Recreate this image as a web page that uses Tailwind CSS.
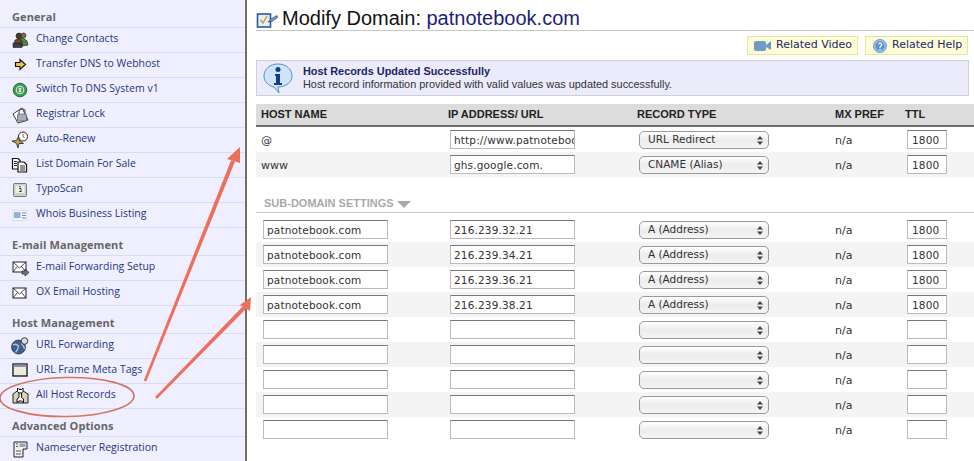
<!DOCTYPE html>
<html lang="en">
<head>
<meta charset="UTF-8">
<title>Modify Domain</title>
<script src="https://cdn.jsdelivr.net/npm/@tailwindcss/browser@4"></script>
</head>
<body class="bg-white w-[974px] h-[461px] overflow-hidden relative font-['Liberation_Sans',sans-serif]">
<div class="flex h-[461px]">
  <!-- left menu -->
  <aside class="w-[247px] shrink-0 bg-[#efefff] border-r-2 border-[#6f6f6f] font-['Open_Sans',sans-serif] text-[10.5px] text-[#27387f]">
    <h3 class="h-[28px] flex items-end pb-[2px] pl-[12px] border-b border-[#d3dff0] text-[11px] tracking-[0.1px] font-bold text-[#666]">General</h3>
    <a class="h-[25px] flex items-center border-b border-[#d3dff0]"><svg class="w-[18px] h-[18px] ml-[11px] mr-[7px]" viewBox="0 0 18 18"><circle cx="8" cy="5" r="3" fill="#4a3a20" stroke="#222" stroke-width=".6"/><circle cx="12.500" cy="4.500" r="2.500" fill="#7a6a48" stroke="#222" stroke-width=".6"/><path d="M8 8 Q13 6 16 10 L17 14 L11 15Z" fill="#4f8a3a" stroke="#222" stroke-width=".7"/><path d="M3 15 L4 9 Q8 7 11 10 L11 15Z" fill="#7b4a22" stroke="#222" stroke-width=".7"/><rect x="2" y="12" width="9" height="4.500" fill="#3a3f4a" stroke="#111" stroke-width=".5"/></svg><span class="-mt-[2px]">Change Contacts</span></a>
    <a class="h-[25px] flex items-center border-b border-[#d3dff0]"><svg class="w-[18px] h-[18px] ml-[11px] mr-[7px]" viewBox="0 0 18 18"><path d="M4.500 6.500 H9 V3.500 L14.500 8.500 L9 13.500 V10.500 H4.500Z" fill="#f2c744" stroke="#111" stroke-width="1.200"/></svg><span class="-mt-[2px]">Transfer DNS to Webhost</span></a>
    <a class="h-[25px] flex items-center border-b border-[#d3dff0]"><svg class="w-[18px] h-[18px] ml-[11px] mr-[7px]" viewBox="0 0 18 18"><circle cx="9" cy="9" r="6.800" fill="#3f9a52" stroke="#2a6a3a"/><circle cx="9" cy="9" r="3.800" fill="none" stroke="#d8f0dc" stroke-width="1"/><path d="M10.500 7.500H8V9H10V10.500H7.500M9 6.500V11.500" fill="none" stroke="#e8f6e8" stroke-width=".8"/></svg><span class="-mt-[2px]">Switch To DNS System v1</span></a>
    <a class="h-[25px] flex items-center border-b border-[#d3dff0]"><svg class="w-[18px] h-[18px] ml-[11px] mr-[7px]" viewBox="0 0 18 18"><path d="M2 8 L11 2 L17 14 L7 17Z" fill="#fff" stroke="#222" stroke-width=".9"/><path d="M8 8V6a3 3 0 0 1 6 0v2" fill="none" stroke="#667" stroke-width="1.300"/><rect x="6.500" y="8" width="9" height="7" rx="1" fill="#a6abb8" stroke="#556" stroke-width=".7"/></svg><span class="-mt-[2px]">Registrar Lock</span></a>
    <a class="h-[25px] flex items-center border-b border-[#d3dff0]"><svg class="w-[18px] h-[18px] ml-[11px] mr-[7px]" viewBox="0 0 18 18"><circle cx="12" cy="5.500" r="4.500" fill="#fff" stroke="#222"/><path d="M12 3v2.500l1.500 1" fill="none" stroke="#444" stroke-width=".8"/><path d="M1 10 L5.500 9.500 L7.500 5.500 L8.500 10 L12.500 12.500 L8 12.500 L7 17 L5.500 12.500Z" fill="#c9a24a" stroke="#222" stroke-width=".8"/></svg><span class="-mt-[2px]">Auto-Renew</span></a>
    <a class="h-[25px] flex items-center border-b border-[#d3dff0]"><svg class="w-[18px] h-[18px] ml-[11px] mr-[7px]" viewBox="0 0 18 18"><path d="M1.500 2.500H7L9 4.500V13H1.500Z" fill="#fff" stroke="#111" stroke-width="1.200"/><path d="M7 6H13L15.500 8.500V16H7Z" fill="#fff" stroke="#111" stroke-width="1.200"/><path d="M3 5.500H6M3 7.500H6M3 9.500H6M9 10H14M9 12H14M9 14H14" stroke="#111" stroke-width=".9"/></svg><span class="-mt-[2px]">List Domain For Sale</span></a>
    <a class="h-[25px] flex items-center border-b border-[#d3dff0]"><svg class="w-[18px] h-[18px] ml-[11px] mr-[7px]" viewBox="0 0 18 18"><rect x="2.500" y="2.500" width="13" height="13" rx="1" fill="#cfcfc8" stroke="#777"/><rect x="4.500" y="4.500" width="9" height="7.500" fill="#f0f0ea"/><path d="M8 7.500h2v3M8 10.500h2.500M8 5.800h2" fill="none" stroke="#333" stroke-width=".9"/></svg><span class="-mt-[2px]">TypoScan</span></a>
    <a class="h-[25px] flex items-center border-b border-[#d3dff0]"><svg class="w-[18px] h-[18px] ml-[11px] mr-[7px]" viewBox="0 0 18 18"><rect x="2" y="4.500" width="14" height="10" fill="#f5f8fc" stroke="#cdd6e4" stroke-width=".7"/><rect x="3" y="6" width="6.500" height="6" fill="#8fb2de"/><path d="M11 7h4M11 9.500h4M11 12h4" stroke="#7a8596"/></svg><span class="-mt-[2px]">Whois Business Listing</span></a>

    <h3 class="h-[28px] flex items-end pb-[2px] pl-[12px] border-b border-[#d3dff0] text-[11px] tracking-[0.1px] font-bold text-[#666]">E-mail Management</h3>
    <a class="h-[25px] flex items-center border-b border-[#d3dff0]"><svg class="w-[18px] h-[18px] ml-[11px] mr-[7px]" viewBox="0 0 18 18"><rect x="2" y="3" width="13" height="10" fill="#fff" stroke="#222"/><path d="M2 3 L8.500 9 L15 3M2 13 L6.500 7.500M15 13 L10.500 7.500" fill="none" stroke="#222" stroke-width=".8"/><path d="M11 12H14V10L18 13.500L14 17V15H11Z" fill="#6f747e" stroke="#222" stroke-width=".7"/></svg><span class="-mt-[2px]">E-mail Forwarding Setup</span></a>
    <a class="h-[25px] flex items-center border-b border-[#d3dff0]"><svg class="w-[18px] h-[18px] ml-[11px] mr-[7px]" viewBox="0 0 18 18"><rect x="2" y="4" width="13" height="10" fill="#fff" stroke="#222"/><path d="M2 4 L8.500 10 L15 4M2 14 L6.500 8.500M15 14 L10.500 8.500" fill="none" stroke="#222" stroke-width=".8"/></svg><span class="-mt-[2px]">OX Email Hosting</span></a>

    <h3 class="h-[28px] flex items-end pb-[2px] pl-[12px] border-b border-[#d3dff0] text-[11px] tracking-[0.1px] font-bold text-[#666]">Host Management</h3>
    <a class="h-[25px] flex items-center border-b border-[#d3dff0]"><svg class="w-[18px] h-[18px] ml-[11px] mr-[7px]" viewBox="0 0 18 18"><circle cx="7.500" cy="10" r="7" fill="#3f5f8c" stroke="#1f2f4a" stroke-width=".7"/><path d="M2 8 Q5 6 7.500 9 Q7 13 4.500 15.500M10 6.500 Q13 8.500 13.500 12" fill="none" stroke="#b5c6dc" stroke-width="1.300"/><circle cx="13.500" cy="4" r="3.300" fill="#d4d8e0" stroke="#222" stroke-width=".8"/></svg><span class="-mt-[2px]">URL Forwarding</span></a>
    <a class="h-[25px] flex items-center border-b border-[#d3dff0]"><svg class="w-[18px] h-[18px] ml-[11px] mr-[7px]" viewBox="0 0 18 18"><rect x="2" y="2" width="14" height="12" fill="#ecebdf" stroke="#111" stroke-width="1.300"/><rect x="2.500" y="2.500" width="13" height="2.500" fill="#8a90a0"/></svg><span class="-mt-[2px]">URL Frame Meta Tags</span></a>
    <a class="h-[25px] flex items-center border-b border-[#d3dff0]"><svg class="w-[18px] h-[18px] ml-[11px] mr-[7px]" viewBox="0 0 18 18"><path d="M2 16V7L9 2L17 7V16Z" fill="#d9d2b4" stroke="#222"/><path d="M6.500 1V4.500L8 6H10.500L12 4.500V1L10.500 2.500H8Z M8 6V10.500L6 12V15.500L8 14H10.500L12.500 15.500V12L10.500 10.500V6" fill="#fff" stroke="#111"/></svg><span class="-mt-[2px]">All Host Records</span></a>

    <h3 class="h-[28px] flex items-end pb-[2px] pl-[12px] border-b border-[#d3dff0] text-[11px] tracking-[0.1px] font-bold text-[#666]">Advanced Options</h3>
    <a class="h-[25px] flex items-center border-b border-[#d3dff0]"><svg class="w-[18px] h-[18px] ml-[11px] mr-[7px]" viewBox="0 0 18 18"><path d="M3 2H16V9H12V17H3Z" fill="#f2f2ea" stroke="#222"/><rect x="8.500" y="3.500" width="6" height="3.500" fill="#9aa4b5"/><path d="M5 4h2M5 6.500h2M5 11h5M5 14h5" stroke="#555"/></svg><span class="-mt-[2px]">Nameserver Registration</span></a>
  </aside>

  <!-- main -->
  <main class="flex-1 pl-[9px] font-['DejaVu_Sans',sans-serif] text-[11px] text-[#333]">
    <div class="h-[31px] flex items-center gap-[4px] border-b border-[#c8c8c8] pt-[6px]">
      <svg class="w-[22px] h-[20px]" viewBox="0 0 22 20"><rect x="1.500" y="6" width="13" height="13" fill="#e4edf8" stroke="#2b5c93" stroke-width="1.600"/><path d="M4.500 12 L7 15 L11 8" fill="none" stroke="#cfa02a" stroke-width="1.500"/><path d="M12 14 L15 11 L21 7.500 L21.500 9.500 L16 13.500Z" fill="#7a9cc6" stroke="#2b3f63" stroke-width=".7"/></svg>
      <h1 class="font-['Liberation_Sans',sans-serif] text-[20px] text-[#111]">Modify Domain: <span class="text-[#1c1f78]">patnotebook.com</span></h1>
    </div>

    <div class="h-[19px] mt-[5px] mr-[6px] flex justify-end gap-[7px] text-[#1f2a6e]">
      <a class="w-[111px] flex items-center gap-[5px] pl-[6px] bg-[#fdfdd8] border border-[#e6e6a0]"><svg class="w-[17px] h-[11px]" viewBox="0 0 17 11"><rect x="0" y="1" width="12" height="10" rx="2" fill="#6f9cc4"/><path d="M12 5 L17 1 V10 L12 7Z" fill="#6f9cc4"/></svg>Related Video</a>
      <a class="w-[103px] flex items-center gap-[5px] pl-[7px] bg-[#fdfdd8] border border-[#e6e6a0]"><svg class="w-[14px] h-[14px]" viewBox="0 0 14 14"><circle cx="7" cy="7" r="6.500" fill="#9cc0e8" stroke="#6f9cc8"/><circle cx="7" cy="7" r="4.500" fill="#5a90d0"/><path d="M5.500 5.500a1.600 1.600 0 1 1 2.200 1.700L7 8v1" fill="none" stroke="#fff" stroke-width="1.200"/><circle cx="7" cy="10.500" r=".8" fill="#fff"/></svg>Related Help</a>
    </div>

    <div class="h-[36px] mt-[5px] mr-[5px] flex items-center bg-[#ebebfb] border border-[#cfcfd8] font-['Liberation_Sans',sans-serif] text-[10.9px] text-[#333]">
      <svg class="w-[32px] h-[32px] ml-[5px] mr-[9px]" viewBox="0 0 32 32"><path d="M16 2C8 2 2 7 2 14c0 6 5 10 10 11l5 6-1-6c8 0 14-5 14-11C30 7 24 2 16 2Z" fill="#cfe4f8" stroke="#5b8fc4"/><circle cx="16" cy="7.500" r="2.500" fill="#123f8c"/><path d="M13 12H18V21H20V23H12V21H14V14H13Z" fill="#123f8c"/></svg>
      <div class="leading-[13px]">
        <p class="font-bold text-[#1c2566]">Host Records Updated Successfully</p>
        <p>Host record information provided with valid values was updated successfully.</p>
      </div>
    </div>

    <div class="h-[23px] mt-[8px] grid grid-cols-[192px_189px_198px_70px_1fr] items-center bg-[#dcdcdc] border-b-2 border-[#6e6e6e] font-['Liberation_Sans',sans-serif] text-[11px] font-bold text-[#222]">
      <span class="pl-[5px]">HOST NAME</span><span>IP ADDRESS/ URL</span><span>RECORD TYPE</span><span>MX PREF</span><span>TTL</span>
    </div>

    <div class="h-[25px] grid grid-cols-[192px_189px_198px_70px_1fr] items-center">
      <span class="pl-[5px] pt-[3px]">@</span>
      <span class="pl-[2px]"><input value="http://www.patnotebook.com" class="w-[125px] h-[19px] pl-[3px] text-[10.5px] tracking-[0.15px] bg-white border border-[#bbb] border-t-[#777]"></span>
      <span class="pl-[2px] relative"><select class="appearance-none w-[130px] h-[18px] pl-[8px] block text-[10.5px] rounded-[5px] border border-[#999] bg-linear-to-b from-white via-[#ececec] to-[#f4f4f4]"><option>URL Redirect</option></select><svg class="absolute left-[120px] top-[5px] w-[6px] h-[9px]" viewBox="0 0 6 9"><path d="M3 0L6 3.500H0ZM3 9L0 5.500H6Z" fill="#444"/></svg></span>
      <span class="pt-[3px]">n/a</span>
      <span class="pl-[2px]"><input value="1800" class="w-[40px] h-[19px] pl-[4px] text-[10.5px] tracking-[0.15px] bg-white border border-[#bbb] border-t-[#777]"></span>
    </div>
    <div class="h-[25px] grid grid-cols-[192px_189px_198px_70px_1fr] items-center bg-[#f4f4f4]">
      <span class="pl-[5px] pt-[3px]">www</span>
      <span class="pl-[2px]"><input value="ghs.google.com." class="w-[125px] h-[19px] pl-[3px] text-[10.5px] tracking-[0.15px] bg-white border border-[#bbb] border-t-[#777]"></span>
      <span class="pl-[2px] relative"><select class="appearance-none w-[130px] h-[18px] pl-[8px] block text-[10.5px] rounded-[5px] border border-[#999] bg-linear-to-b from-white via-[#ececec] to-[#f4f4f4]"><option>CNAME (Alias)</option></select><svg class="absolute left-[120px] top-[5px] w-[6px] h-[9px]" viewBox="0 0 6 9"><path d="M3 0L6 3.500H0ZM3 9L0 5.500H6Z" fill="#444"/></svg></span>
      <span class="pt-[3px]">n/a</span>
      <span class="pl-[2px]"><input value="1800" class="w-[40px] h-[19px] pl-[4px] text-[10.5px] tracking-[0.15px] bg-white border border-[#bbb] border-t-[#777]"></span>
    </div>

    <div class="h-[36px] mb-[4px] flex items-end gap-[3px] pl-[8px] pb-[1px] border-b border-[#c8c8c8] font-['Liberation_Sans',sans-serif] text-[11px] font-bold text-[#aaa]">
      SUB-DOMAIN SETTINGS
      <svg class="w-[14px] h-[7px] mb-[3px]" viewBox="0 0 14 7"><path d="M0 0H14L7 7Z" fill="#aaa"/></svg>
    </div>

    <div class="h-[25px] grid grid-cols-[192px_189px_198px_70px_1fr] items-center">
      <span class="pl-[7px]"><input value="patnotebook.com" class="w-[125px] h-[19px] pl-[3px] text-[10.5px] tracking-[0.15px] bg-white border border-[#bbb] border-t-[#777]"></span>
      <span class="pl-[2px]"><input value="216.239.32.21" class="w-[125px] h-[19px] pl-[3px] text-[10.5px] tracking-[0.15px] bg-white border border-[#bbb] border-t-[#777]"></span>
      <span class="pl-[2px] relative"><select class="appearance-none w-[130px] h-[18px] pl-[8px] block text-[10.5px] rounded-[5px] border border-[#999] bg-linear-to-b from-white via-[#ececec] to-[#f4f4f4]"><option>A (Address)</option></select><svg class="absolute left-[120px] top-[5px] w-[6px] h-[9px]" viewBox="0 0 6 9"><path d="M3 0L6 3.500H0ZM3 9L0 5.500H6Z" fill="#444"/></svg></span>
      <span class="pt-[3px]">n/a</span>
      <span class="pl-[2px]"><input value="1800" class="w-[40px] h-[19px] pl-[4px] text-[10.5px] tracking-[0.15px] bg-white border border-[#bbb] border-t-[#777]"></span>
    </div>
    <div class="h-[25px] grid grid-cols-[192px_189px_198px_70px_1fr] items-center bg-[#f4f4f4]">
      <span class="pl-[7px]"><input value="patnotebook.com" class="w-[125px] h-[19px] pl-[3px] text-[10.5px] tracking-[0.15px] bg-white border border-[#bbb] border-t-[#777]"></span>
      <span class="pl-[2px]"><input value="216.239.34.21" class="w-[125px] h-[19px] pl-[3px] text-[10.5px] tracking-[0.15px] bg-white border border-[#bbb] border-t-[#777]"></span>
      <span class="pl-[2px] relative"><select class="appearance-none w-[130px] h-[18px] pl-[8px] block text-[10.5px] rounded-[5px] border border-[#999] bg-linear-to-b from-white via-[#ececec] to-[#f4f4f4]"><option>A (Address)</option></select><svg class="absolute left-[120px] top-[5px] w-[6px] h-[9px]" viewBox="0 0 6 9"><path d="M3 0L6 3.500H0ZM3 9L0 5.500H6Z" fill="#444"/></svg></span>
      <span class="pt-[3px]">n/a</span>
      <span class="pl-[2px]"><input value="1800" class="w-[40px] h-[19px] pl-[4px] text-[10.5px] tracking-[0.15px] bg-white border border-[#bbb] border-t-[#777]"></span>
    </div>
    <div class="h-[25px] grid grid-cols-[192px_189px_198px_70px_1fr] items-center">
      <span class="pl-[7px]"><input value="patnotebook.com" class="w-[125px] h-[19px] pl-[3px] text-[10.5px] tracking-[0.15px] bg-white border border-[#bbb] border-t-[#777]"></span>
      <span class="pl-[2px]"><input value="216.239.36.21" class="w-[125px] h-[19px] pl-[3px] text-[10.5px] tracking-[0.15px] bg-white border border-[#bbb] border-t-[#777]"></span>
      <span class="pl-[2px] relative"><select class="appearance-none w-[130px] h-[18px] pl-[8px] block text-[10.5px] rounded-[5px] border border-[#999] bg-linear-to-b from-white via-[#ececec] to-[#f4f4f4]"><option>A (Address)</option></select><svg class="absolute left-[120px] top-[5px] w-[6px] h-[9px]" viewBox="0 0 6 9"><path d="M3 0L6 3.500H0ZM3 9L0 5.500H6Z" fill="#444"/></svg></span>
      <span class="pt-[3px]">n/a</span>
      <span class="pl-[2px]"><input value="1800" class="w-[40px] h-[19px] pl-[4px] text-[10.5px] tracking-[0.15px] bg-white border border-[#bbb] border-t-[#777]"></span>
    </div>
    <div class="h-[25px] grid grid-cols-[192px_189px_198px_70px_1fr] items-center bg-[#f4f4f4]">
      <span class="pl-[7px]"><input value="patnotebook.com" class="w-[125px] h-[19px] pl-[3px] text-[10.5px] tracking-[0.15px] bg-white border border-[#bbb] border-t-[#777]"></span>
      <span class="pl-[2px]"><input value="216.239.38.21" class="w-[125px] h-[19px] pl-[3px] text-[10.5px] tracking-[0.15px] bg-white border border-[#bbb] border-t-[#777]"></span>
      <span class="pl-[2px] relative"><select class="appearance-none w-[130px] h-[18px] pl-[8px] block text-[10.5px] rounded-[5px] border border-[#999] bg-linear-to-b from-white via-[#ececec] to-[#f4f4f4]"><option>A (Address)</option></select><svg class="absolute left-[120px] top-[5px] w-[6px] h-[9px]" viewBox="0 0 6 9"><path d="M3 0L6 3.500H0ZM3 9L0 5.500H6Z" fill="#444"/></svg></span>
      <span class="pt-[3px]">n/a</span>
      <span class="pl-[2px]"><input value="1800" class="w-[40px] h-[19px] pl-[4px] text-[10.5px] tracking-[0.15px] bg-white border border-[#bbb] border-t-[#777]"></span>
    </div>

    <div class="h-[25px] grid grid-cols-[192px_189px_198px_70px_1fr] items-center">
      <span class="pl-[7px]"><input class="w-[125px] h-[19px] pl-[3px] bg-white border border-[#bbb] border-t-[#777]"></span>
      <span class="pl-[2px]"><input class="w-[125px] h-[19px] pl-[3px] bg-white border border-[#bbb] border-t-[#777]"></span>
      <span class="pl-[2px] relative"><select class="appearance-none w-[130px] h-[18px] pl-[8px] block text-[10.5px] rounded-[5px] border border-[#999] bg-linear-to-b from-white via-[#ececec] to-[#f4f4f4]"><option></option></select><svg class="absolute left-[120px] top-[5px] w-[6px] h-[9px]" viewBox="0 0 6 9"><path d="M3 0L6 3.500H0ZM3 9L0 5.500H6Z" fill="#444"/></svg></span>
      <span class="pt-[3px]">n/a</span>
      <span class="pl-[2px]"><input class="w-[40px] h-[19px] pl-[4px] bg-white border border-[#bbb] border-t-[#777]"></span>
    </div>
    <div class="h-[25px] grid grid-cols-[192px_189px_198px_70px_1fr] items-center bg-[#f4f4f4]">
      <span class="pl-[7px]"><input class="w-[125px] h-[19px] pl-[3px] bg-white border border-[#bbb] border-t-[#777]"></span>
      <span class="pl-[2px]"><input class="w-[125px] h-[19px] pl-[3px] bg-white border border-[#bbb] border-t-[#777]"></span>
      <span class="pl-[2px] relative"><select class="appearance-none w-[130px] h-[18px] pl-[8px] block text-[10.5px] rounded-[5px] border border-[#999] bg-linear-to-b from-white via-[#ececec] to-[#f4f4f4]"><option></option></select><svg class="absolute left-[120px] top-[5px] w-[6px] h-[9px]" viewBox="0 0 6 9"><path d="M3 0L6 3.500H0ZM3 9L0 5.500H6Z" fill="#444"/></svg></span>
      <span class="pt-[3px]">n/a</span>
      <span class="pl-[2px]"><input class="w-[40px] h-[19px] pl-[4px] bg-white border border-[#bbb] border-t-[#777]"></span>
    </div>
    <div class="h-[25px] grid grid-cols-[192px_189px_198px_70px_1fr] items-center">
      <span class="pl-[7px]"><input class="w-[125px] h-[19px] pl-[3px] bg-white border border-[#bbb] border-t-[#777]"></span>
      <span class="pl-[2px]"><input class="w-[125px] h-[19px] pl-[3px] bg-white border border-[#bbb] border-t-[#777]"></span>
      <span class="pl-[2px] relative"><select class="appearance-none w-[130px] h-[18px] pl-[8px] block text-[10.5px] rounded-[5px] border border-[#999] bg-linear-to-b from-white via-[#ececec] to-[#f4f4f4]"><option></option></select><svg class="absolute left-[120px] top-[5px] w-[6px] h-[9px]" viewBox="0 0 6 9"><path d="M3 0L6 3.500H0ZM3 9L0 5.500H6Z" fill="#444"/></svg></span>
      <span class="pt-[3px]">n/a</span>
      <span class="pl-[2px]"><input class="w-[40px] h-[19px] pl-[4px] bg-white border border-[#bbb] border-t-[#777]"></span>
    </div>
    <div class="h-[25px] grid grid-cols-[192px_189px_198px_70px_1fr] items-center bg-[#f4f4f4]">
      <span class="pl-[7px]"><input class="w-[125px] h-[19px] pl-[3px] bg-white border border-[#bbb] border-t-[#777]"></span>
      <span class="pl-[2px]"><input class="w-[125px] h-[19px] pl-[3px] bg-white border border-[#bbb] border-t-[#777]"></span>
      <span class="pl-[2px] relative"><select class="appearance-none w-[130px] h-[18px] pl-[8px] block text-[10.5px] rounded-[5px] border border-[#999] bg-linear-to-b from-white via-[#ececec] to-[#f4f4f4]"><option></option></select><svg class="absolute left-[120px] top-[5px] w-[6px] h-[9px]" viewBox="0 0 6 9"><path d="M3 0L6 3.500H0ZM3 9L0 5.500H6Z" fill="#444"/></svg></span>
      <span class="pt-[3px]">n/a</span>
      <span class="pl-[2px]"><input class="w-[40px] h-[19px] pl-[4px] bg-white border border-[#bbb] border-t-[#777]"></span>
    </div>
    <div class="h-[25px] grid grid-cols-[192px_189px_198px_70px_1fr] items-center">
      <span class="pl-[7px]"><input class="w-[125px] h-[19px] pl-[3px] bg-white border border-[#bbb] border-t-[#777]"></span>
      <span class="pl-[2px]"><input class="w-[125px] h-[19px] pl-[3px] bg-white border border-[#bbb] border-t-[#777]"></span>
      <span class="pl-[2px] relative"><select class="appearance-none w-[130px] h-[18px] pl-[8px] block text-[10.5px] rounded-[5px] border border-[#999] bg-linear-to-b from-white via-[#ececec] to-[#f4f4f4]"><option></option></select><svg class="absolute left-[120px] top-[5px] w-[6px] h-[9px]" viewBox="0 0 6 9"><path d="M3 0L6 3.500H0ZM3 9L0 5.500H6Z" fill="#444"/></svg></span>
      <span class="pt-[3px]">n/a</span>
      <span class="pl-[2px]"><input class="w-[40px] h-[19px] pl-[4px] bg-white border border-[#bbb] border-t-[#777]"></span>
    </div>
  </main>
</div>

<!-- annotation drawn over the screenshot -->
<svg class="absolute left-0 top-0 w-[974px] h-[461px] pointer-events-none" viewBox="0 0 974 461">
  <ellipse cx="67" cy="397" rx="67" ry="19.500" fill="none" stroke="#d8735f" stroke-width="1.600" transform="rotate(-1 67 397)"/>
  <path d="M143.800 380.500 L146.200 381.500 L234.900 161.700 L231.100 160.300Z" fill="#ee6f5b"/>
  <path d="M240 147 L240 163 L227 159Z" fill="#ee6f5b"/>
  <path d="M155.100 397.100 L156.900 398.900 L246.400 308.400 L243.600 305.600Z" fill="#ee6f5b"/>
  <path d="M251 297 L250 311 L240 305Z" fill="#ee6f5b"/>
</svg>
</body>
</html>
